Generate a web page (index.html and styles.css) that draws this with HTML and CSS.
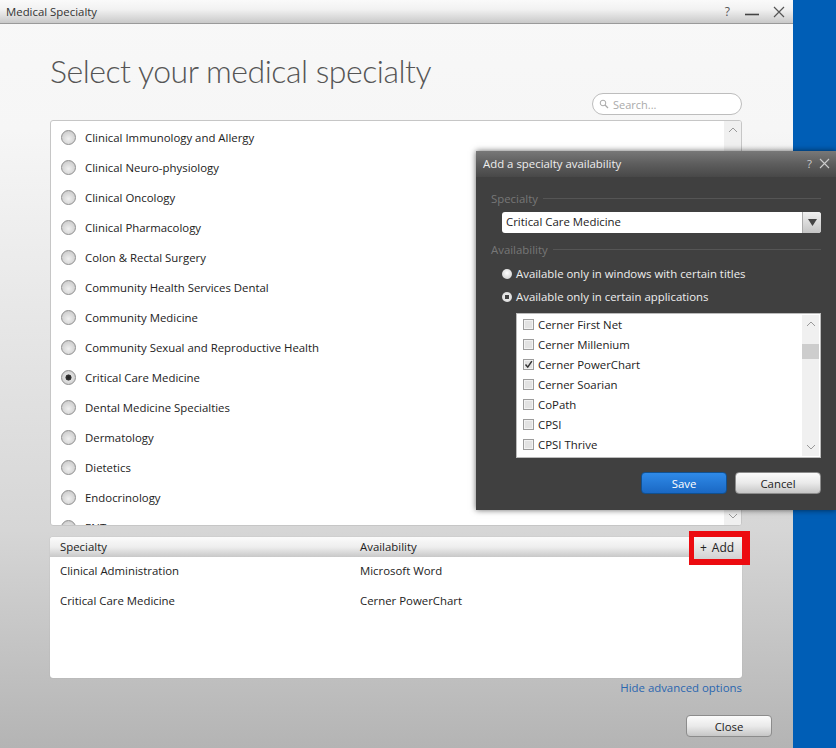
FILE: index.html
```html
<!DOCTYPE html>
<html lang="en">
<head>
<meta charset="utf-8">
<title>Medical Specialty</title>
<link rel="stylesheet" href="styles.css">
</head>
<body>
<div class="window">
  <header class="titlebar">
    <span class="titlebar-name">Medical Specialty</span>
    <div class="win-controls">
      <span class="win-help">?</span>
      <svg class="win-icon" width="14" height="14" viewBox="0 0 14 14"><path d="M0 9.5h14" stroke="#444" stroke-width="1.6"/></svg>
      <svg class="win-icon" width="14" height="14" viewBox="0 0 14 14"><path d="M2 2l10 10M12 2L2 12" stroke="#555" stroke-width="1.2" fill="none"/></svg>
    </div>
  </header>
  <main class="content">
    <h1 class="heading">Select your medical specialty</h1>
    <div class="search-row">
      <div class="search">
        <svg width="10" height="10" viewBox="0 0 10 10"><circle cx="4" cy="4" r="2.8" stroke="#aaa" fill="none"/><path d="M6 6l3 3" stroke="#aaa" stroke-width="1.2"/></svg>
        <span>Search...</span>
      </div>
    </div>
    <div class="list">
      <div class="list-rows">
        <div class="row"><i class="radio"></i>Clinical Immunology and Allergy</div>
        <div class="row"><i class="radio"></i>Clinical Neuro-physiology</div>
        <div class="row"><i class="radio"></i>Clinical Oncology</div>
        <div class="row"><i class="radio"></i>Clinical Pharmacology</div>
        <div class="row"><i class="radio"></i>Colon &amp; Rectal Surgery</div>
        <div class="row"><i class="radio"></i>Community Health Services Dental</div>
        <div class="row"><i class="radio"></i>Community Medicine</div>
        <div class="row"><i class="radio"></i>Community Sexual and Reproductive Health</div>
        <div class="row"><i class="radio radio-on"></i>Critical Care Medicine</div>
        <div class="row"><i class="radio"></i>Dental Medicine Specialties</div>
        <div class="row"><i class="radio"></i>Dermatology</div>
        <div class="row"><i class="radio"></i>Dietetics</div>
        <div class="row"><i class="radio"></i>Endocrinology</div>
        <div class="row"><i class="radio"></i>ENT</div>
      </div>
      <div class="scrollbar">
        <svg width="10" height="6" viewBox="0 0 10 6"><path d="M1 5l4-4 4 4" stroke="#999" fill="none"/></svg>
        <svg width="10" height="6" viewBox="0 0 10 6"><path d="M1 1l4 4 4-4" stroke="#999" fill="none"/></svg>
      </div>
    </div>
    <section class="table">
      <div class="table-head">
        <span class="col-a">Specialty</span>
        <span class="col-b">Availability</span>
        <div class="add">+ Add<span class="callout"></span></div>
      </div>
      <div class="table-row"><span class="col-a">Clinical Administration</span><span class="col-b">Microsoft Word</span></div>
      <div class="table-row"><span class="col-a">Critical Care Medicine</span><span class="col-b">Cerner PowerChart</span></div>
    </section>
    <div class="link-row"><a class="link">Hide advanced options</a></div>
    <div class="close-row"><button class="btn btn-close">Close</button></div>
  </main>
</div>
<div class="desktop"></div>

<aside class="dialog">
  <div class="dialog-title">
    <span>Add a specialty availability</span>
    <div class="dialog-controls">
      <span>?</span>
      <svg width="11" height="11" viewBox="0 0 11 11"><path d="M1 1l9 9M10 1l-9 9" stroke="#ccc" stroke-width="1.1" fill="none"/></svg>
    </div>
  </div>
  <div class="dialog-body">
    <div class="legend"><span>Specialty</span><i></i></div>
    <div class="select">
      <span class="select-value">Critical Care Medicine</span>
      <span class="select-arrow"><svg width="9" height="7" viewBox="0 0 9 7"><path d="M0 0h9L4.5 7z" fill="#444"/></svg></span>
    </div>
    <div class="legend legend-2"><span>Availability</span><i></i></div>
    <div class="opt"><i class="dk-radio"></i>Available only in windows with certain titles</div>
    <div class="opt"><i class="dk-radio dk-radio-on"></i>Available only in certain applications</div>
    <div class="apps">
      <div class="apps-rows">
        <div class="app"><i class="check"></i>Cerner First Net</div>
        <div class="app"><i class="check"></i>Cerner Millenium</div>
        <div class="app"><i class="check"><svg width="11" height="11" viewBox="0 0 12 12"><path d="M2 6l3 3.5L10.5 1.5" stroke="#333" stroke-width="2" fill="none"/></svg></i>Cerner PowerChart</div>
        <div class="app"><i class="check"></i>Cerner Soarian</div>
        <div class="app"><i class="check"></i>CoPath</div>
        <div class="app"><i class="check"></i>CPSI</div>
        <div class="app"><i class="check"></i>CPSI Thrive</div>
      </div>
      <div class="apps-scroll">
        <svg width="10" height="6" viewBox="0 0 10 6"><path d="M1 5l4-4 4 4" stroke="#999" fill="none"/></svg>
        <span class="thumb"></span>
        <svg width="10" height="6" viewBox="0 0 10 6"><path d="M1 1l4 4 4-4" stroke="#999" fill="none"/></svg>
      </div>
    </div>
    <div class="dialog-actions">
      <button class="btn btn-save">Save</button>
      <button class="btn">Cancel</button>
    </div>
  </div>
</aside>
</body>
</html>
```
FILE: styles.css
```css
* { box-sizing: border-box; }
html, body { height: 100%; }
body {
  margin: 0;
  display: flex;
  height: 748px;
  overflow: hidden;
  position: relative;
  font-family: "Open Sans", "Noto Sans", sans-serif;
  font-size: 11.4px;
  color: #222;
}
.window {
  width: 793px;
  height: 748px;
  display: flex;
  flex-direction: column;
  background: linear-gradient(180deg, #f8f8f8 0, #f6f6f6 130px, #d6d6d6 530px, #b4b4b4 748px);
}
.desktop { flex: 1; background: #005eb6; }

.titlebar {
  height: 24px;
  flex: none;
  display: flex;
  align-items: center;
  justify-content: space-between;
  padding: 0 7px 0 6px;
  background: linear-gradient(180deg, #fafafa 0, #f2f2f2 40%, #c9c9c9 100%);
  border-bottom: 1px solid #9a9a9a;
  color: #333;
}
.win-controls { display: flex; align-items: center; gap: 13px; color: #555; }
.win-help { margin-right: 2px; font-size: 12px; }
.win-icon { display: block; }

.content { padding: 0 0 0 50px; flex: 1; }
.heading {
  margin: 25px 0 0;
  height: 44px;
  line-height: 44px;
  font-family: Lato, "Open Sans", sans-serif;
  font-size: 32px;
  font-weight: 300;
  letter-spacing: -0.48px;
  color: #555;
}
.search-row { display: flex; width: 692px; justify-content: flex-end; margin-top: 0; }
.search {
  width: 150px;
  height: 22px;
  display: flex;
  align-items: center;
  gap: 4px;
  padding-left: 6px;
  border: 1px solid #bdbdbd;
  border-radius: 11px;
  background: #fff;
  color: #aaa;
  font-size: 11px;
}
.list {
  width: 692px;
  height: 406px;
  margin-top: 5px;
  display: flex;
  background: #fff;
  border: 1px solid #c6c6c6;
  border-radius: 3px;
  overflow: hidden;
}
.list-rows { flex: 1; padding: 1px 0 0 10px; overflow: hidden; }
.row { height: 30px; display: flex; align-items: center; gap: 9px; color: #222; }
.radio {
  width: 15px;
  height: 15px;
  flex: none;
  border-radius: 50%;
  border: 1px solid #8e8e8e;
  background: radial-gradient(circle at 50% 60%, #f0f0f0 0, #d4d4d4 60%, #bcbcbc 100%);
}
.radio-on { background: radial-gradient(circle, #222 0, #333 30%, #e2e2e2 36%, #c4c4c4 100%); }
.scrollbar {
  width: 17px;
  flex: none;
  background: #f0f0f0;
  display: flex;
  flex-direction: column;
  justify-content: space-between;
  align-items: center;
  padding: 6px 0;
}

.table {
  width: 692px;
  height: 141px;
  margin-top: 11px;
  background: #fff;
  border-radius: 3px;
  box-shadow: 0 0 1px #999;
}
.table-head {
  height: 20px;
  margin-bottom: -1px;
  padding-bottom: 2px;
  display: flex;
  align-items: center;
  background: linear-gradient(180deg, #fbfbfb 0, #eeeeee 50%, #c8c8c8 100%);
  border-radius: 3px 3px 0 0;
}
.col-a { width: 300px; margin-left: 10px; flex: none; }
.col-b { flex: 1; }
.add {
  width: 48px;
  height: 22px;
  flex: none;
  align-self: flex-start;
  position: relative;
  z-index: 1;
  display: flex;
  align-items: center;
  justify-content: center;
  padding: 0 2px 1px 0;
  background: linear-gradient(180deg, #f6f6f6, #d2d2d2);
  font-size: 12px;
  word-spacing: 2px;
}
.callout {
  position: absolute;
  left: -5px;
  top: -6px;
  width: 61px;
  height: 34px;
  border-style: solid;
  border-color: #ec0b10;
  border-width: 6px 8px 6px 5px;
}
.table-row { height: 30px; padding-bottom: 2px; display: flex; align-items: center; position: relative; }

.link-row { width: 692px; display: flex; justify-content: flex-end; margin-top: 0; height: 18px; align-items: center; }
.link { color: #2a66b0; }
.close-row { display: flex; justify-content: flex-end; width: 722px; margin-top: 19px; }

.btn {
  width: 86px;
  height: 22px;
  padding: 0;
  border: 1px solid #8c8c8c;
  border-radius: 4px;
  background: linear-gradient(180deg, #fbfbfb 0, #eaeaea 50%, #c6c6c6 100%);
  font: inherit;
  color: #222;
}

.dialog {
  position: absolute;
  left: 476px;
  top: 151px;
  width: 360px;
  height: 359px;
  background: #404040;
  box-shadow: 0 0 6px rgba(0,0,0,.6);
  color: #eee;
}
.dialog-title {
  height: 26px;
  padding: 0 6px 2px 7px;
  display: flex;
  align-items: center;
  justify-content: space-between;
  background: linear-gradient(180deg, #787878 0, #5d5d5d 50%, #484848 100%);
}
.dialog-controls { display: flex; align-items: center; gap: 7px; color: #ccc; }
.dialog-body { padding: 12px 15px 0 15px; }
.legend { display: flex; align-items: center; gap: 5px; height: 18px; color: #777; }
.legend i { flex: 1; height: 1px; background: #555; }
.legend-2 { margin-top: 7px; }
.select {
  margin: 5px 0 0 11px;
  height: 21px;
  display: flex;
  background: #fff;
  border-radius: 3px;
  color: #222;
  overflow: hidden;
}
.select-value { flex: 1; padding-left: 4px; line-height: 20px; }
.select-arrow {
  width: 19px;
  display: flex;
  align-items: center;
  justify-content: center;
  border-left: 1px solid #aaa;
  background: linear-gradient(180deg, #f0f0f0, #c4c4c4);
}
.opt { height: 23px; display: flex; align-items: center; gap: 4px; margin-left: 11px; color: #eee; }
.legend-2 + .opt { margin-top: 4px; }
.dk-radio {
  width: 10px;
  height: 10px;
  flex: none;
  border-radius: 50%;
  background: radial-gradient(circle at 50% 40%, #fff, #c8c8c8);
}
.dk-radio-on { background: radial-gradient(circle, #404040 0, #404040 30%, #e8e8e8 36%, #cfcfcf 100%); }
.apps {
  margin: 5px 0 0 25px;
  height: 145px;
  display: flex;
  background: #fff;
  border: 1px solid #bbb;
  color: #222;
}
.apps-rows { flex: 1; padding-top: 0; overflow: hidden; }
.app { height: 20px; display: flex; align-items: center; gap: 4px; padding-left: 6px; }
.check {
  width: 11px;
  height: 11px;
  flex: none;
  border: 1px solid #9c9c9c;
  background: #e2e2e2;
  box-shadow: inset 0 0 0 1px #f2f2f2;
  display: flex;
  align-items: center;
  justify-content: center;
}
.apps-scroll {
  width: 17px;
  margin: 1px;
  flex: none;
  background: #f0f0f0;
  position: relative;
  display: flex;
  flex-direction: column;
  justify-content: space-between;
  align-items: center;
  padding: 6px 0;
}
.thumb { position: absolute; left: 0; right: 0; top: 29px; height: 15px; background: #cdcdcd; }
.dialog-actions { display: flex; justify-content: flex-end; gap: 8px; margin-top: 14px; }
.btn-save {
  background: linear-gradient(180deg, #2f8ae8 0, #1a68c4 100%);
  border-color: #11508f;
  color: #fff;
}
```
